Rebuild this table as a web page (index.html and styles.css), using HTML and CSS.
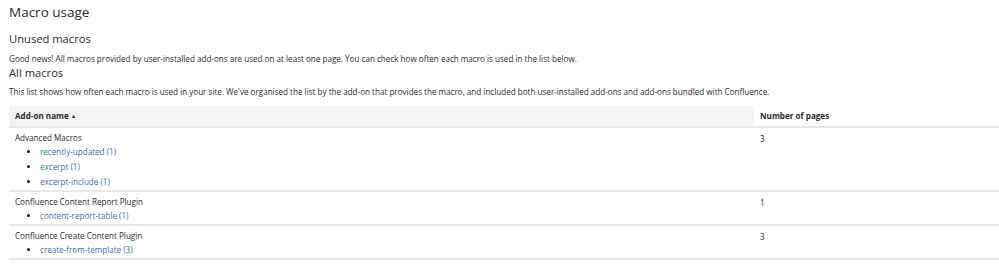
FILE: index.html
```html
<!DOCTYPE html>
<html lang="en">
<head>
  <meta charset="UTF-8">
  <title>Macro usage</title>
  <link rel="stylesheet" href="styles.css">
</head>
<body>
  <div class="page">
    <h2>Macro usage</h2>
    <h3 class="unused">Unused macros</h3>
    <p class="intro">Good news! All macros provided by user-installed add-ons are used on at least one page. You can check how often each macro is used in the list below.</p>
    <h3>All macros</h3>
    <p class="desc">This list shows how often each macro is used in your site. We've organised the list by the add-on that provides the macro, and included both user-installed add-ons and add-ons bundled with Confluence.</p>
    <table class="macros">
      <thead>
        <tr>
          <th class="sorted">Add-on name <span class="arrow">&#9652;</span></th>
          <th class="count">Number of pages</th>
        </tr>
      </thead>
      <tbody>
        <tr>
          <td><div class="addon">Advanced Macros</div>
            <ul>
              <li><a href="#">recently-updated (1)</a></li>
              <li><a href="#">excerpt (1)</a></li>
              <li><a href="#">excerpt-include (1)</a></li>
            </ul>
          </td>
          <td class="count">3</td>
        </tr>
        <tr>
          <td><div class="addon">Confluence Content Report Plugin</div>
            <ul>
              <li><a href="#">content-report-table (1)</a></li>
            </ul>
          </td>
          <td class="count">1</td>
        </tr>
        <tr>
          <td><div class="addon">Confluence Create Content Plugin</div>
            <ul>
              <li><a href="#">create-from-template (3)</a></li>
            </ul>
          </td>
          <td class="count">3</td>
        </tr>
      </tbody>
    </table>
  </div>
</body>
</html>
```

FILE: styles.css
```css
* { box-sizing: border-box; margin: 0; padding: 0; }
body { font-family: 'Open Sans', 'Noto Sans', sans-serif; font-size: 8.1px; color: #2b2b2b; background: #fff; }
.page { padding-left: 9px; }
h2 { font-size: 13.5px; font-weight: normal; line-height: 20px; margin-top: 2px; }
h3 { font-size: 11.2px; font-weight: normal; line-height: 16px; }
h3.unused { margin-top: 9px; }
p { line-height: 12px; }
p.intro { margin-top: 6px; }
p.desc { margin-top: 5px; }
table.macros { width: 100%; border-collapse: collapse; margin-top: 8px; }
th { text-align: left; font-weight: bold; padding: 0 6px; height: 21px; line-height: 20px; border-bottom: 2px solid #e8e8e8; }
th.sorted { background: #f4f4f4; }
.arrow { font-size: 6px; vertical-align: 1px; margin-left: 1px; }
td { vertical-align: top; padding: 3px 6px 1px; border-bottom: 2px solid #e8e8e8; }
th.count, td.count { width: 245px; }
td.count { line-height: 13px; padding-top: 4px; }
.addon { line-height: 12px; padding-top: 1px; }
ul { list-style: disc; padding-left: 25px; }
li { line-height: 15px; height: 15px; }
li::marker { color: #111; }
a { color: #3b6fb6; text-decoration: none; }
```
